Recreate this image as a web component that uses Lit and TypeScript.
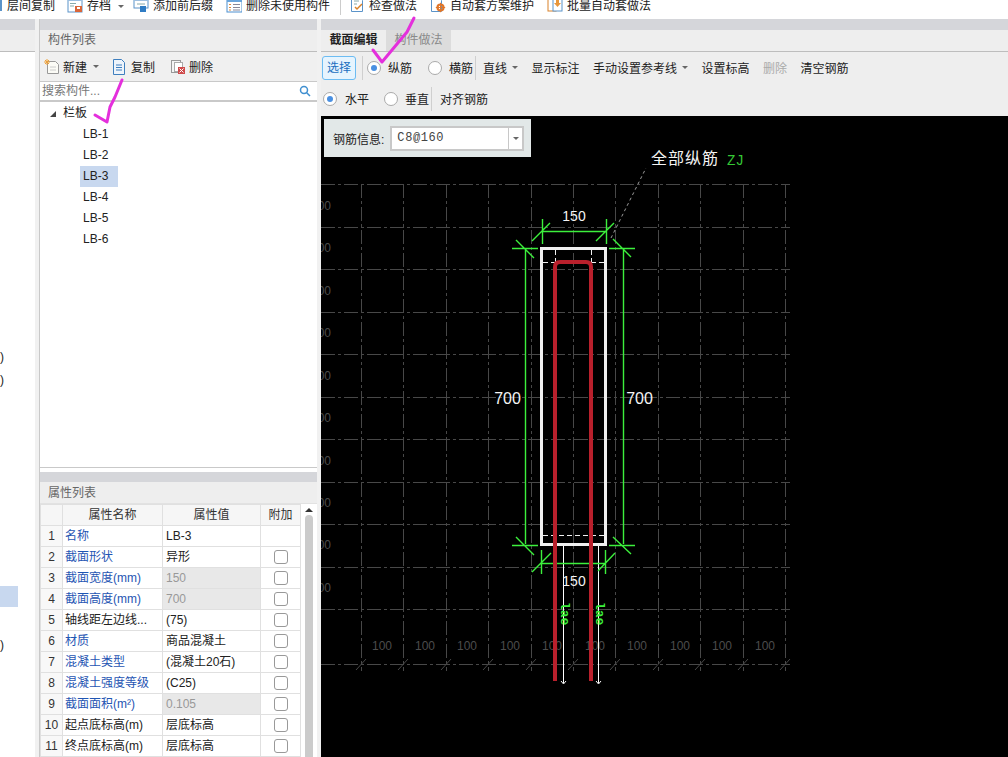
import { LitElement, css, html, svg } from 'lit';
import { customElement } from 'lit/decorators.js';

const gridX = [361, 403, 446, 488, 531, 573, 615, 658, 700, 743, 785];
const gridY = [184, 227, 269, 312, 354, 397, 439, 482, 524, 567, 609, 664];
const leftLabels = [206, 248, 291, 333, 376, 418, 461, 503, 545, 588];
const bottomLabels = [382, 425, 467, 510, 552, 595, 637, 680, 722, 765];

const props = [
  { name: '名称', value: 'LB-3', link: true, noCheck: true },
  { name: '截面形状', value: '异形', link: true },
  { name: '截面宽度(mm)', value: '150', link: true, ro: true },
  { name: '截面高度(mm)', value: '700', link: true, ro: true },
  { name: '轴线距左边线...', value: '(75)' },
  { name: '材质', value: '商品混凝土', link: true },
  { name: '混凝土类型', value: '(混凝土20石)', link: true },
  { name: '混凝土强度等级', value: '(C25)', link: true },
  { name: '截面面积(m²)', value: '0.105', link: true, ro: true },
  { name: '起点底标高(m)', value: '层底标高' },
  { name: '终点底标高(m)', value: '层底标高' },
];

const icon = (body: unknown) => html`<svg class="ico" width="16" height="16" viewBox="0 0 16 16">${body}</svg>`;

const icons = {
  save: svg`<rect x="1" y="1" width="14" height="14" fill="#fff" stroke="#5b93c9"/><rect x="1" y="1" width="14" height="3" fill="#9dbfe0"/><path d="M3 6.5h6M3 9h4" stroke="#8aa" /><rect x="8" y="9" width="7" height="6" fill="#d9663a"/><rect x="10" y="10" width="3" height="2" fill="#fff"/>`,
  add: svg`<rect x="1" y="1" width="14" height="10" fill="#fff" stroke="#5b93c9"/><rect x="1" y="1" width="14" height="3" fill="#9dbfe0"/><path d="M4 7h8" stroke="#8aa"/><rect x="7" y="9" width="6" height="6" fill="#2f7cc4"/>`,
  list: svg`<rect x="1" y="2" width="15" height="13" fill="#fff" stroke="#4d8fcf"/><rect x="1" y="2" width="15" height="3" fill="#6aa5dc"/><path d="M3 7.5h2M3 10.5h2M3 13h2" stroke="#e08a3a"/><path d="M7 7.5h7M7 10.5h7M7 13h7" stroke="#889"/>`,
  check: svg`<path d="M2.500 .5h8l3 3v11h-11z" fill="#fff" stroke="#5b93c9"/><path d="M5 4h5M5 7h3" stroke="#8aa"/><path d="M6 10l2 2 5-5" fill="none" stroke="#d9822b" stroke-width="1.500"/>`,
  gear: svg`<path d="M1.500 .5h7l3 3v11h-10z" fill="#fff" stroke="#5b93c9"/><circle cx="10.500" cy="10.500" r="3" fill="none" stroke="#e0762a" stroke-width="2.200"/><path d="M10.500 5.800v9.400M5.800 10.500h9.400" stroke="#e0762a"/>`,
  batch: svg`<rect x="1" y="2" width="8" height="12" fill="#fff" stroke="#d9822b"/><rect x="6" y="0" width="9" height="14" fill="#fff" stroke="#5b93c9"/><path d="M9 1h3v5h2l-3.500 4-3.500-4h2z" fill="#e8963a"/>`,
  newDoc: svg`<path d="M3.500 2.500h8l3 3v9h-11z" fill="#fbfbf6" stroke="#999"/><path d="M6 8h6M6 11h6" stroke="#ccc"/><path d="M3 0v6M0 3h6M1 1l4 4M5 1l-4 4" stroke="#eda13a"/>`,
  copy: svg`<path d="M1.500 .5h8l3 3v12h-11z" fill="#eef4fb" stroke="#3f7fbe"/><path d="M4 6h6M4 8.500h6M4 11h6" stroke="#3f7fbe"/>`,
  del: svg`<rect x="1.500" y="1.500" width="9" height="12" fill="#f4f4f4" stroke="#999"/><rect x="4.500" y="3.500" width="8" height="9" fill="#fff" stroke="#aaa"/><rect x="8" y="8" width="7" height="7" fill="#cf4a4a"/><path d="M9.500 9.500l4 4M13.500 9.500l-4 4" stroke="#fff"/>`,
};

@customElement('app-root')
export class AppRoot extends LitElement {
  static styles = css`
    :host {
      display: block;
      width: 1008px;
      height: 757px;
      overflow: hidden;
      position: relative;
      background: #fff;
      color: #222;
      font: 12px 'Liberation Sans', 'Noto Sans CJK SC', sans-serif;
    }
    .topbar {
      height: 19px;
      display: flex;
      gap: 13px;
      padding-left: 7px;
      line-height: 13px;
      white-space: nowrap;
      background: #fff;
      position: relative;
      overflow: hidden;
    }
    .topbar .edge {
      position: absolute;
      left: 0;
      top: 0;
      width: 2px;
      height: 11px;
      background: #5b93c9;
    }
    .topitem {
      display: flex;
      gap: 4px;
      align-items: flex-start;
    }
    .topitem.first {
      margin-right: -1px;
    }
    .topitem .ico {
      margin-top: -3px;
    }
    .topsep {
      width: 1px;
      height: 15px;
      background: #ccc;
      margin: 0 -5px 0 -3px;
    }
    .caret {
      width: 0;
      height: 0;
      border: 3px solid transparent;
      border-top: 3px solid #666;
      border-bottom: 0;
      display: inline-block;
      flex: none;
    }
    .topitem .caret {
      margin: 5px -4px 0 3px;
    }
    .main {
      display: grid;
      grid-template-columns: 35px 286px 1fr;
      height: 738px;
      background: #f1f1f1;
    }
    .band {
      height: 11px;
      background: #d5d6da;
    }
    .head {
      height: 21px;
      line-height: 21px;
      padding-left: 8px;
      background: #eeeeee;
      border-bottom: 1px solid #bdbdbd;
      color: #666;
    }
    .stub {
      overflow: hidden;
      background: #fff;
    }
    .stub .body {
      display: flex;
      flex-direction: column;
    }
    .paren {
      height: 20px;
      line-height: 20px;
      color: #222;
    }
    .stubsel {
      height: 21px;
      width: 18px;
      background: #c8d8ef;
      margin-top: 196px;
    }
    .mid {
      margin: 0 4px;
      display: flex;
      flex-direction: column;
      border-left: 1px solid #c9c9c9;
      background: #fff;
      min-height: 0;
    }
    .comp {
      height: 448px;
      border-bottom: 1px solid #c9c9c9;
      display: flex;
      flex-direction: column;
    }
    .minibar {
      height: 29px;
      display: flex;
      align-items: center;
      padding-left: 4px;
      background: #f0f0f0;
      border-bottom: 1px solid #c9c9c9;
    }
    .minibar .btn {
      display: flex;
      align-items: center;
      gap: 3px;
    }
    .minibar .caret {
      margin: 0 0 0 3px;
    }
    .minibar .copy {
      margin-left: 13px;
    }
    .minibar .del {
      margin-left: 15px;
    }
    .search {
      height: 18px;
      line-height: 18px;
      padding-left: 2px;
      color: #777;
      display: flex;
      justify-content: space-between;
      align-items: center;
      padding-right: 6px;
      border-bottom: 2px solid #c9c9c9;
    }
    .tree {
      flex: 1;
      padding-top: 1px;
    }
    .row {
      height: 21px;
      line-height: 21px;
      display: flex;
      align-items: center;
    }
    .row.group {
      padding-left: 10px;
      gap: 7px;
    }
    .tri {
      width: 0;
      height: 0;
      border-left: 6px solid transparent;
      border-bottom: 6px solid #444;
    }
    .row .leaf {
      margin-left: 40px;
      width: 38px;
      padding-left: 3px;
      box-sizing: border-box;
      height: 21px;
    }
    .row .leaf.on {
      background: #c8d8ef;
    }
    .attrs {
      margin-top: 4px;
      flex: 1;
      min-height: 0;
      overflow: hidden;
    }
    .attrs .band {
      height: 10px;
    }
    .attrs .head {
      line-height: 23px;
      border-bottom: 1px solid #e2e2e2;
    }
    .tablewrap {
      display: flex;
      align-items: flex-start;
    }
    table {
      border-collapse: collapse;
      table-layout: fixed;
      width: 260px;
    }
    th,
    td {
      height: 21px;
      line-height: 18px;
      padding: 0 0 0 3px;
      border: 1px solid #e0e0e0;
      box-sizing: border-box;
      font-weight: normal;
      white-space: nowrap;
      overflow: hidden;
    }
    th {
      background: #f6f6f6;
      text-align: center;
      padding: 0;
      color: #333;
    }
    td.num {
      padding: 0;
      text-align: center;
      background: #f8f8f8;
      color: #333;
    }
    td.name {
      padding-left: 2px;
    }
    td.link {
      color: #1f55b3;
    }
    td.ro {
      background: #e8e8e8;
      color: #999;
    }
    td.chk {
      padding: 0;
    }
    .box {
      display: block;
      width: 12px;
      height: 12px;
      border: 1px solid #999;
      border-radius: 3px;
      background: #fff;
      margin: 0 auto;
    }
    .scroll {
      width: 17px;
      display: flex;
      flex-direction: column;
      align-items: center;
    }
    .scroll .up {
      width: 0;
      height: 0;
      border: 4px solid transparent;
      border-top: 0;
      border-bottom: 4px solid #333;
      margin: 4px 0 3px;
    }
    .scroll .thumb {
      width: 8px;
      height: 245px;
      border-radius: 4px 4px 0 0;
      background: #cbcbcb;
    }
    .right {
      display: flex;
      flex-direction: column;
      min-width: 0;
      background: #eeeeee;
    }
    .tabs {
      height: 21px;
      display: flex;
      border-bottom: 1px solid #bdbdbd;
    }
    .tab {
      width: 65px;
      text-align: center;
      line-height: 21px;
      font-weight: bold;
    }
    .tab.off {
      background: #dcdcdc;
      color: #8a8a8a;
      font-weight: normal;
    }
    .tools {
      display: flex;
      align-items: center;
      white-space: nowrap;
      box-sizing: border-box;
    }
    .tools.first {
      height: 31px;
      padding-left: 1px;
    }
    .tools.second {
      height: 33px;
      padding: 0 0 2px 2px;
    }
    .select {
      width: 34px;
      height: 24px;
      line-height: 22px;
      text-align: center;
      box-sizing: border-box;
      border: 1px solid #6cbcf2;
      border-radius: 3px;
      background: #e6f4fe;
      color: #1a6fc0;
    }
    .vsep {
      width: 1px;
      height: 24px;
      background: #cfcfcf;
    }
    .radio {
      display: flex;
      align-items: center;
      gap: 7px;
    }
    .dot {
      width: 14px;
      height: 14px;
      box-sizing: border-box;
      border: 1px solid #aaa;
      border-radius: 50%;
      background: #fff;
      display: flex;
      align-items: center;
      justify-content: center;
    }
    .dot.on::after {
      content: '';
      width: 6px;
      height: 6px;
      border-radius: 50%;
      background: #4a90e2;
    }
    .actions {
      display: flex;
      align-items: center;
      gap: 13.5px;
      margin-left: 7px;
    }
    .actions .drop {
      display: flex;
      align-items: center;
      gap: 5px;
    }
    .muted {
      color: #aaa;
    }
    .canvas {
      flex: 1;
      min-height: 0;
      background: #000;
      position: relative;
      overflow: hidden;
    }
    .canvas svg {
      display: block;
    }
    .info {
      position: absolute;
      left: 3px;
      top: 3px;
      width: 207px;
      height: 38px;
      background: #e2e8e8;
      display: flex;
      align-items: center;
      padding-left: 9px;
      box-sizing: border-box;
      gap: 6px;
    }
    .combo {
      width: 134px;
      height: 25px;
      box-sizing: border-box;
      border: 2px solid #c8c8c8;
      background: #fff;
      display: flex;
      align-items: center;
      padding-left: 5px;
      font-family: 'Liberation Mono', monospace;
      letter-spacing: 0.6px;
      color: #444;
    }
    .combo .val {
      flex: 1;
    }
    .combo .arrow {
      width: 13px;
      height: 100%;
      border-left: 1px solid #c8c8c8;
      display: flex;
      align-items: center;
      justify-content: center;
    }
    .marks {
      position: absolute;
      left: 0;
      top: 0;
      pointer-events: none;
    }
  `;

  private topItem(ic: unknown, label: string, caret = false) {
    return html`<div class="topitem">${icon(ic)}<span>${label}</span>${caret ? html`<i class="caret"></i>` : ''}</div>`;
  }

  private drawing() {
    const dashes = '14 3 3 3';
    return svg`
      <g stroke="#484848" stroke-dasharray=${dashes} fill="none">
        ${gridY.map((y) => svg`<line x1="321" y1=${y + 0.5} x2="790" y2=${y + 0.5}></line>`)}
        ${gridX.map((x) => svg`<line x1=${x + 0.5} y1="184" x2=${x + 0.5} y2="671"></line>`)}
      </g>
      <g stroke="#484848">
        ${gridX.map((x) => svg`<line x1=${x - 5} y1="670" x2=${x + 5} y2="659"></line>`)}
      </g>
      <g fill="#4c4c4c" font-size="12" font-family="Liberation Sans">
        ${leftLabels.map((y) => svg`<text x="331" y=${y + 4} text-anchor="end">100</text>`)}
        ${bottomLabels.map((x) => svg`<text x=${x} y="650" text-anchor="middle">100</text>`)}
      </g>
      <path d="M611 238L646 168" stroke="#999" stroke-dasharray="3 3" fill="none"></path>
      <g stroke="#f0f0f0" stroke-dasharray="5 3" fill="none">
        <path d="M543 262.500H604M555.500 250V262M591.500 250V262M543 535.500H604"></path>
      </g>
      <rect x="541.500" y="248.500" width="64" height="296" fill="none" stroke="#f0f0f0" stroke-width="3"></rect>
      <g stroke="#fff" fill="none">
        <path d="M563.500 546V683M598.500 546V683M561 681l2.500 3 2.500-3M596 681l2.500 3 2.500-3"></path>
      </g>
      <g stroke="#3cf03c" stroke-width="1.400" fill="none">
        <path d="M542.500 219V244M606.500 219V244M542 231.500H606M532 241L550 223M596 241L614 223"></path>
        <path d="M525.500 248V544M512 248.500H538M512 545.500H538M516 240L534 258M516 537L534 555"></path>
        <path d="M623.500 248V544M609 248.500H635M609 545.500H635M613 239L631 257M613 537L631 554"></path>
        <path d="M541.500 550V574M605.500 550V574M541 563.500H605M532 572L551 553M598 571L615 553"></path>
      </g>
      <path d="M555 681V267Q555 262 560 262H586Q591 262 591 267V681" fill="none" stroke="#b9202c" stroke-width="4"></path>
      <g fill="#f4f4f4" font-family="Liberation Sans">
        <text x="574" y="221" font-size="14" text-anchor="middle">150</text>
        <text x="574" y="586" font-size="14" text-anchor="middle">150</text>
        <text x="507.500" y="404" font-size="16" text-anchor="middle">700</text>
        <text x="639.500" y="404" font-size="16" text-anchor="middle">700</text>
        <text x="651" y="164" font-size="16" letter-spacing="1" font-family="Noto Sans CJK SC">全部纵筋</text>
      </g>
      <text x="727" y="165" font-size="14" fill="#35c835" font-family="Liberation Mono">ZJ</text>
      <g fill="#3cf03c" font-size="13" font-weight="bold" font-family="Liberation Mono">
        <text transform="translate(561 602) rotate(90)">lae</text>
        <text transform="translate(596 602) rotate(90)">lae</text>
      </g>
    `;
  }

  protected render() {
    return html`
      <div class="topbar">
        <i class="edge"></i>
        <div class="topitem first"><span>层间复制</span></div>
        ${this.topItem(icons.save, '存档', true)} ${this.topItem(icons.add, '添加前后缀')}
        ${this.topItem(icons.list, '删除未使用构件')}
        <i class="topsep"></i>
        ${this.topItem(icons.check, '检查做法')} ${this.topItem(icons.gear, '自动套方案维护')}
        ${this.topItem(icons.batch, '批量自动套做法')}
      </div>

      <div class="main">
        <div class="stub">
          <div class="band"></div>
          <div class="head"></div>
          <div class="body">
            <div class="paren" style="margin-top:295px">)</div>
            <div class="paren" style="margin-top:3px">)</div>
            <div class="stubsel"></div>
            <div class="paren" style="margin-top:28px">)</div>
          </div>
        </div>

        <div class="mid">
          <div class="comp">
            <div class="band"></div>
            <div class="head">构件列表</div>
            <div class="minibar">
              <div class="btn">${icon(icons.newDoc)}<span>新建</span><i class="caret"></i></div>
              <div class="btn copy">${icon(icons.copy)}<span>复制</span></div>
              <div class="btn del">${icon(icons.del)}<span>删除</span></div>
            </div>
            <div class="search">
              <span>搜索构件...</span>
              <svg width="12" height="12" viewBox="0 0 12 12">
                <circle cx="5" cy="5" r="3.500" fill="none" stroke="#3f8fd0" stroke-width="1.500"></circle>
                <path d="M7.500 7.500L11 11" stroke="#3f8fd0" stroke-width="1.500"></path>
              </svg>
            </div>
            <div class="tree">
              <div class="row group"><i class="tri"></i><span>栏板</span></div>
              ${['LB-1', 'LB-2', 'LB-3', 'LB-4', 'LB-5', 'LB-6'].map(
                (n) => html`<div class="row"><span class="leaf ${n === 'LB-3' ? 'on' : ''}">${n}</span></div>`,
              )}
            </div>
          </div>

          <div class="attrs">
            <div class="band"></div>
            <div class="head">属性列表</div>
            <div class="tablewrap">
              <table>
                <colgroup>
                  <col style="width:22px" />
                  <col style="width:100px" />
                  <col style="width:98px" />
                  <col style="width:40px" />
                </colgroup>
                <tr>
                  <th></th>
                  <th>属性名称</th>
                  <th>属性值</th>
                  <th>附加</th>
                </tr>
                ${props.map(
                  (p, i) => html`<tr>
                    <td class="num">${i + 1}</td>
                    <td class="name ${p.link ? 'link' : ''}">${p.name}</td>
                    <td class=${p.ro ? 'ro' : ''}>${p.value}</td>
                    <td class="chk">${p.noCheck ? '' : html`<i class="box"></i>`}</td>
                  </tr>`,
                )}
              </table>
              <div class="scroll"><i class="up"></i><i class="thumb"></i></div>
            </div>
          </div>
        </div>

        <div class="right">
          <div class="band"></div>
          <div class="tabs">
            <div class="tab">截面编辑</div>
            <div class="tab off">构件做法</div>
          </div>
          <div class="tools first">
            <div class="select">选择</div>
            <i class="vsep" style="margin:0 4px 0 6px"></i>
            <div class="radio"><i class="dot on"></i><span>纵筋</span></div>
            <div class="radio" style="margin-left:16px"><i class="dot"></i><span>横筋</span></div>
            <i class="vsep" style="margin-left:2px"></i>
            <div class="actions">
              <div class="drop"><span>直线</span><i class="caret"></i></div>
              <span>显示标注</span>
              <div class="drop"><span>手动设置参考线</span><i class="caret"></i></div>
              <span>设置标高</span>
              <span class="muted">删除</span>
              <span>清空钢筋</span>
            </div>
          </div>
          <div class="tools second">
            <div class="radio"><i class="dot on"></i><span style="margin-left:1px">水平</span></div>
            <div class="radio" style="margin-left:15px"><i class="dot"></i><span>垂直</span></div>
            <i class="vsep" style="margin-left:2px"></i>
            <span style="margin-left:8px">对齐钢筋</span>
          </div>
          <div class="canvas">
            <svg width="687" height="641" viewBox="321 116 687 641">${this.drawing()}</svg>
            <div class="info">
              <span>钢筋信息:</span>
              <div class="combo">
                <span class="val">C8@160</span>
                <span class="arrow"><i class="caret"></i></span>
              </div>
            </div>
          </div>
        </div>
      </div>

      <svg class="marks" width="1008" height="757" viewBox="0 0 1008 757">
        <g fill="none" stroke="#e42fdc" stroke-width="3" stroke-linecap="round" stroke-linejoin="round">
          <path d="M122 80L115 97L110 107L107 122L95 115"></path>
          <path d="M414 18L407 32L392 50L382 62L373 50"></path>
        </g>
      </svg>
    `;
  }
}
